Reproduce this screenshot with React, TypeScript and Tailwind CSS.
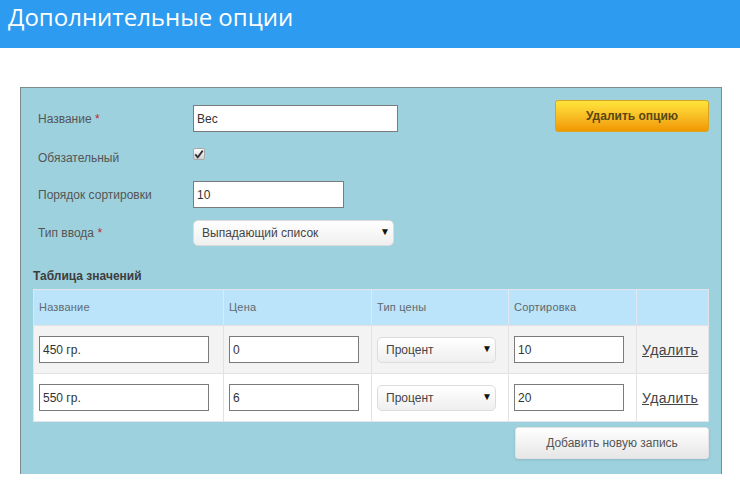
import { ChangeEvent, useState } from 'react';

const sans = "font-['Liberation_Sans',Arial,sans-serif]";

function Field({ value, className }: { value: string; className: string }) {
  const [text, setText] = useState(value);
  return (
    <input
      value={text}
      onChange={(e: ChangeEvent<HTMLInputElement>) => setText(e.target.value)}
      className={`h-[27px] border border-[#7b7b7b] bg-white pl-[3px] text-xs text-[#333] outline-none ${className}`}
    />
  );
}

function Select({ value, className }: { value: string; className: string }) {
  return (
    <div className={`relative h-[26px] ${className}`}>
      <select
        defaultValue={value}
        className="h-full w-full appearance-none rounded-[5px] border border-[#dcdcdc] bg-gradient-to-b from-white to-[#efefef] pl-2 text-xs text-[#444] outline-none"
      >
        <option>{value}</option>
      </select>
      <span className="pointer-events-none absolute right-[4px] top-[5px] text-[10px] leading-[14px] text-[#111]">▼</span>
    </div>
  );
}

function Label({ text, required }: { text: string; required?: boolean }) {
  return (
    <div className="w-[155px] text-xs text-[#555]">
      {text}
      {required && <span className="text-[#c0272d]"> *</span>}
    </div>
  );
}

const rows = [
  { name: '450 гр.', price: '0', sort: '10', bg: 'bg-[#f3f3f3]' },
  { name: '550 гр.', price: '6', sort: '20', bg: 'bg-white' },
];

const th = 'h-[35px] border-r border-[#dfe9ee] pl-[5px] text-[11px] tracking-[0.2px] text-[#5f6a70] flex items-center';
const td = 'h-[47px] border-r border-[#e2e2e2] pl-[5px] flex items-center';

export default function App() {
  return (
    <div className={`h-[484px] w-[740px] overflow-hidden bg-white ${sans}`}>
      <header className="h-12 bg-[#2d9bf0] pl-2 font-['Open_Sans',sans-serif] text-[24px] leading-[33px] text-white">
        Дополнительные опции
      </header>

      <main className="mx-5 mt-[39px] h-[387px] w-[702px] border border-b-0 border-[#7f8a8d] bg-[#9dd1de] pl-3 pr-3">
        <div className="flex justify-between">
          <div className="pl-[5px] pt-[17px]">
            <div className="flex items-center">
              <Label text="Название" required />
              <Field value="Вес" className="w-[205px]" />
            </div>
            <div className="mt-[13px] flex h-[22px] items-center">
              <div className="pt-[3px]">
                <Label text="Обязательный" />
              </div>
              <span className="mb-1 flex h-3 w-3 items-center justify-center rounded-[2px] border border-[#a9a9a9] bg-gradient-to-b from-white to-[#d0d0d0]">
                <svg viewBox="0 0 12 12" className="h-[10px] w-[10px]">
                  <path d="M1.5 6.5 4.5 10 10.5 2" fill="none" stroke="#333" strokeWidth="2.2" />
                </svg>
              </span>
            </div>
            <div className="mt-[14px] flex items-center">
              <Label text="Порядок сортировки" />
              <Field value="10" className="w-[151px]" />
            </div>
            <div className="mt-3 flex items-center">
              <Label text="Тип ввода" required />
              <Select value="Выпадающий список" className="w-[201px]" />
            </div>
          </div>
          <button className="mt-3 h-8 w-[154px] rounded-[3px] border border-[#d9a520] bg-gradient-to-b from-[#ffe53b] to-[#f09800] text-xs font-bold text-[#5a4714]">
            Удалить опцию
          </button>
        </div>

        <div className="mt-[23px] text-xs leading-[14px] font-bold text-[#3d3d3d]">Таблица значений</div>

        <div className="mt-[6px] w-[676px] border border-[#dfe5e8] bg-white">
          <div className="grid grid-cols-[190px_148px_137px_128px_71px] bg-[#bbe3f9]">
            <div className={th}>Название</div>
            <div className={th}>Цена</div>
            <div className={th}>Тип цены</div>
            <div className={th}>Сортировка</div>
            <div className="h-[35px]" />
          </div>
          {rows.map((row) => (
            <div key={row.name} className={`grid grid-cols-[190px_148px_137px_128px_71px] border-t border-[#e2e2e2] ${row.bg}`}>
              <div className={td}>
                <Field value={row.name} className="w-[170px]" />
              </div>
              <div className={td}>
                <Field value={row.price} className="w-[130px]" />
              </div>
              <div className={td}>
                <Select value="Процент" className="w-[119px]" />
              </div>
              <div className={td}>
                <Field value={row.sort} className="w-[110px]" />
              </div>
              <div className="flex h-[47px] items-center pl-[5px]">
                <a href="#" className="text-sm tracking-[0.4px] text-[#444] underline">Удалить</a>
              </div>
            </div>
          ))}
        </div>

        <div className="mt-[5px] flex w-[676px] justify-end">
          <button className="h-8 w-[194px] rounded-[3px] border border-[#e3e3e3] bg-gradient-to-b from-white to-[#e6e6e6] text-xs text-[#555] shadow-sm">
            Добавить новую запись
          </button>
        </div>
      </main>
    </div>
  );
}
